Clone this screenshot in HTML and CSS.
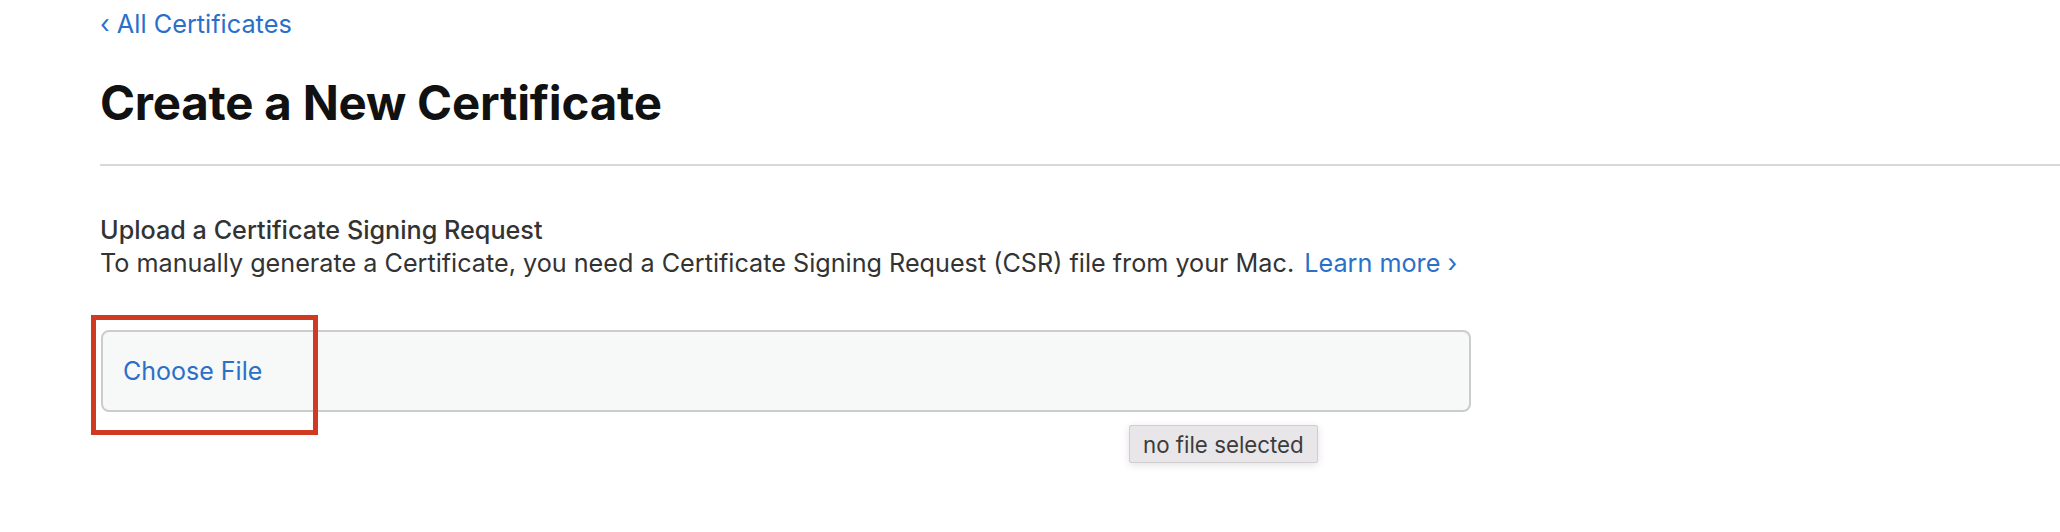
FILE: index.html
```html
<!DOCTYPE html>
<html lang="en">
<head>
<meta charset="utf-8">
<title>Create a New Certificate</title>
<link rel="stylesheet" href="styles.css">
</head>
<body>
<main class="page">
  <a class="back" href="#"><span class="chev">‹</span> All Certificates</a>
  <h1 class="title">Create a New Certificate</h1>
  <hr class="divider">
  <section class="upload">
    <h2 class="upload-title">Upload a Certificate Signing Request</h2>
    <p class="upload-desc">To manually generate a Certificate, you need a Certificate Signing Request (CSR) file from your Mac. <a class="more" href="#">Learn more ›</a></p>
    <div class="file-field">
      <span class="choose">Choose File</span>
      <div class="highlight"></div>
      <div class="tooltip">no file selected</div>
    </div>
  </section>
</main>
</body>
</html>
```
FILE: styles.css
```css
html, body {
  margin: 0;
  padding: 0;
  background: #ffffff;
}
body {
  font-family: Inter, "Liberation Sans", Arial, sans-serif;
  color: #333333;
  min-height: 532px;
}
.page {
  padding-left: 100px;
}
.back {
  display: block;
  padding-top: 8px;
  font-size: 25.3px;
  line-height: 32px;
  color: #2a70c9;
  text-decoration: none;
}
.title {
  margin: 0;
  margin-top: 35px;
  font-size: 47.4px;
  line-height: 56px;
  font-weight: 700;
  color: #111111;
  letter-spacing: -0.2px;
}
.divider {
  margin: 0;
  margin-top: 33px;
  border: 0;
  height: 2px;
  background: #d8d8d8;
}
.upload {
  padding-top: 48px;
}
.upload-title {
  margin: 0;
  font-size: 25.2px;
  line-height: 33px;
  font-weight: 500;
  color: #333333;
}
.upload-desc {
  margin: 0;
  font-size: 25.2px;
  line-height: 33px;
  color: #333333;
}
.more {
  color: #2a70c9;
  text-decoration: none;
  margin-left: 3px;
}
.file-field {
  position: relative;
  box-sizing: border-box;
  margin-top: 50px;
  margin-left: 1px;
  width: 1370px;
  height: 82px;
  border: 2px solid #cccccc;
  border-radius: 8px;
  background: #f7f8f8;
  display: flex;
  align-items: center;
  padding-left: 20px;
}
.choose {
  font-size: 25px;
  color: #2a70c9;
}
.highlight {
  position: absolute;
  left: -12px;
  top: -17px;
  width: 227px;
  height: 120px;
  box-sizing: border-box;
  border: 5px solid #d13a22;
}
.tooltip {
  position: absolute;
  left: 1026px;
  top: 93px;
  box-sizing: border-box;
  height: 38px;
  padding: 0 13px;
  display: flex;
  align-items: center;
  background: #e8e6e8;
  border: 1px solid #cfcdcf;
  border-radius: 2px;
  box-shadow: 0 2px 8px rgba(0,0,0,0.12);
  font-size: 22.3px;
  color: #3c3c3c;
}
```
